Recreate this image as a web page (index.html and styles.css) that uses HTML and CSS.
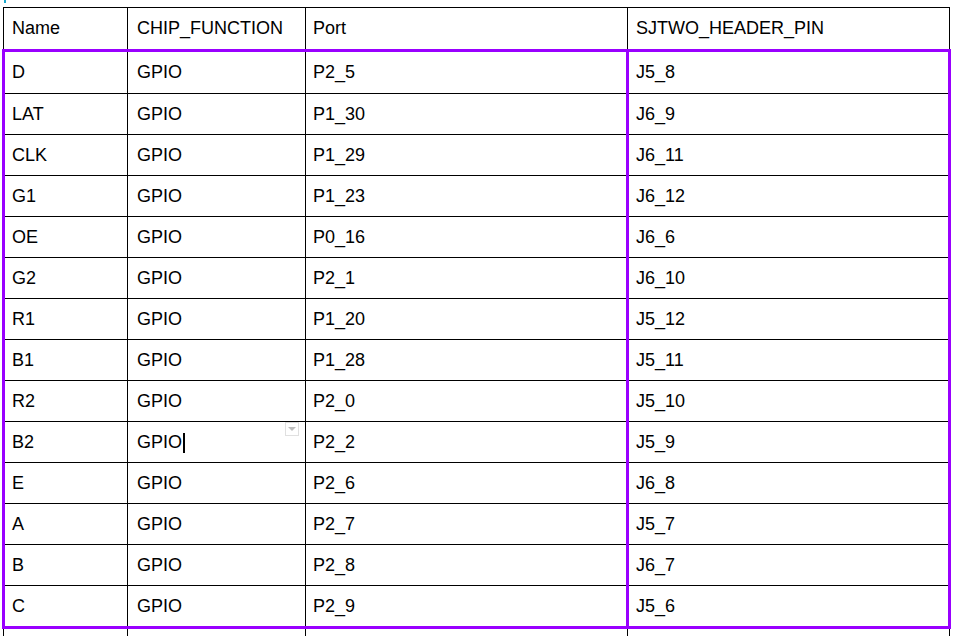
FILE: index.html
```html
<!DOCTYPE html>
<html lang="en">
<head>
<meta charset="utf-8">
<title>Pin table</title>
<link rel="stylesheet" href="styles.css">
</head>
<body>
<div class="mark"></div>
<table class="pins">
  <colgroup>
    <col class="c1"><col class="c2"><col class="c3"><col class="c4">
  </colgroup>
  <thead>
    <tr class="head"><th>Name</th><th>CHIP_FUNCTION</th><th>Port</th><th>SJTWO_HEADER_PIN</th></tr>
  </thead>
  <tbody class="sel">
    <tr class="top"><td>D</td><td>GPIO</td><td>P2_5</td><td>J5_8</td></tr>
    <tr><td>LAT</td><td>GPIO</td><td>P1_30</td><td>J6_9</td></tr>
    <tr><td>CLK</td><td>GPIO</td><td>P1_29</td><td>J6_11</td></tr>
    <tr><td>G1</td><td>GPIO</td><td>P1_23</td><td>J6_12</td></tr>
    <tr><td>OE</td><td>GPIO</td><td>P0_16</td><td>J6_6</td></tr>
    <tr><td>G2</td><td>GPIO</td><td>P2_1</td><td>J6_10</td></tr>
    <tr><td>R1</td><td>GPIO</td><td>P1_20</td><td>J5_12</td></tr>
    <tr><td>B1</td><td>GPIO</td><td>P1_28</td><td>J5_11</td></tr>
    <tr><td>R2</td><td>GPIO</td><td>P2_0</td><td>J5_10</td></tr>
    <tr><td>B2</td><td class="active">GPIO<span class="caret"></span><span class="drop"></span></td><td>P2_2</td><td>J5_9</td></tr>
    <tr><td>E</td><td>GPIO</td><td>P2_6</td><td>J6_8</td></tr>
    <tr><td>A</td><td>GPIO</td><td>P2_7</td><td>J5_7</td></tr>
    <tr><td>B</td><td>GPIO</td><td>P2_8</td><td>J6_7</td></tr>
    <tr class="bottom"><td>C</td><td>GPIO</td><td>P2_9</td><td>J5_6</td></tr>
  </tbody>
  <tbody>
    <tr class="extra"><td></td><td></td><td></td><td></td></tr>
  </tbody>
</table>
</body>
</html>
```

FILE: styles.css
```css
html, body {
  margin: 0;
  padding: 0;
  background: #fff;
  overflow: hidden;
}

body {
  font-family: "Liberation Sans", Arial, sans-serif;
  font-size: 18px;
  color: #000;
}

.mark {
  width: 2px;
  height: 3px;
  margin-left: 4px;
  background: #18a8cc;
}

.pins {
  border-collapse: collapse;
  table-layout: fixed;
  width: 949px;
  margin: 4px 0 0 2px;
}

.c1 { width: 124px; }
.c2 { width: 178px; }
.c3 { width: 322px; }
.c4 { width: 322px; }

.pins th,
.pins td {
  border: 1px solid #000;
  padding: 0 8px;
  text-align: left;
  font-weight: normal;
  line-height: 21px;
  vertical-align: middle;
  white-space: nowrap;
}

.pins td:nth-child(2),
.pins th:nth-child(2) { padding-left: 9px; }
.pins td:nth-child(3),
.pins th:nth-child(3) { padding-left: 7px; }

.pins tr { height: 41px; }
.pins tr.head { height: 43px; }
.pins tr.top { height: 43px; }
.pins tr.bottom { height: 42px; }

.sel td:first-child { border-left: 3px solid #9900ff; padding-left: 7px; }
.sel td:nth-child(3) { border-right: 3px solid #9900ff; }
.sel td:last-child { border-right: 3px solid #9900ff; padding-left: 7px; }
.sel tr.top td { border-top: 3px solid #9900ff; }
.sel tr.bottom td { border-bottom: 3px solid #9900ff; }

.active { position: relative; }

.caret {
  display: inline-block;
  width: 2px;
  height: 20px;
  background: #000;
  vertical-align: -5px;
  margin-left: 1px;
}

.drop {
  position: absolute;
  top: 0;
  right: 6px;
  width: 12px;
  height: 12px;
  border: 1px solid #e0e0e0;
  background: #fff;
}

.drop::after {
  content: "";
  position: absolute;
  left: 2px;
  top: 4px;
  border-left: 4px solid transparent;
  border-right: 4px solid transparent;
  border-top: 4px solid #bdbdbd;
}
```
